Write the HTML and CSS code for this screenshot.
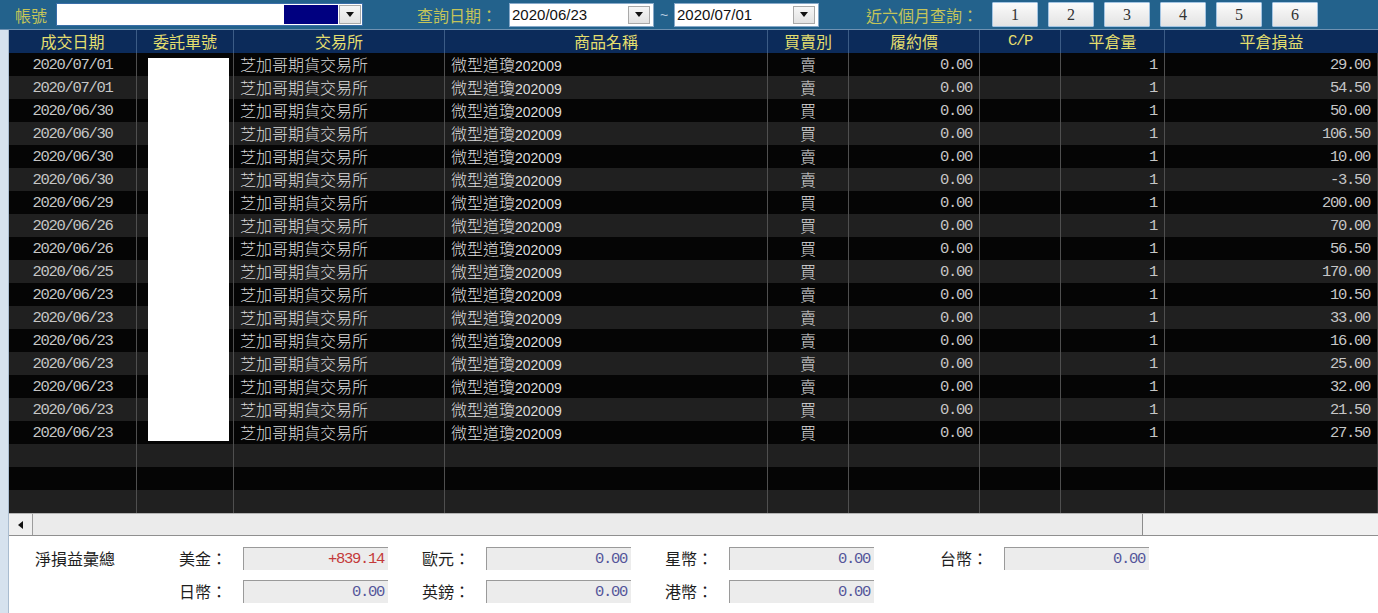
FILE: index.html
```html
<!DOCTYPE html>
<html lang="zh-Hant">
<head>
<meta charset="utf-8">
<title>平倉損益查詢</title>
<link rel="stylesheet" href="styles.css">
</head>
<body>
<div class="app">
  <div class="toolbar">
    <span class="tlabel acct-label">帳號</span>
    <div class="combo account">
      <div class="combo-text"></div>
      <div class="combo-sel"></div>
      <div class="drop-btn"><span class="tri"></span></div>
    </div>
    <span class="tlabel date-label">查詢日期：</span>
    <div class="combo date-combo">
      <span class="date-text">2020/06/23</span>
      <div class="drop-btn"><span class="tri"></span></div>
    </div>
    <span class="tilde">~</span>
    <div class="combo date-combo">
      <span class="date-text">2020/07/01</span>
      <div class="drop-btn"><span class="tri"></span></div>
    </div>
    <span class="tlabel recent-label">近六個月查詢：</span>
    <div class="month-btns">
      <button class="mbtn">1</button>
      <button class="mbtn">2</button>
      <button class="mbtn">3</button>
      <button class="mbtn">4</button>
      <button class="mbtn">5</button>
      <button class="mbtn">6</button>
    </div>
  </div>

  <div class="body">
    <div class="gutter"></div>
    <div class="content">
      <div class="row head">
        <div class="c">成交日期</div>
        <div class="c">委託單號</div>
        <div class="c">交易所</div>
        <div class="c">商品名稱</div>
        <div class="c">買賣別</div>
        <div class="c">履約價</div>
        <div class="c mono">C/P</div>
        <div class="c">平倉量</div>
        <div class="c">平倉損益</div>
      </div>

      <div class="rows">
        <div class="row"><div class="c date">2020/07/01</div><div class="c"></div><div class="c">芝加哥期貨交易所</div><div class="c">微型道瓊<span class="lat">202009</span></div><div class="c ctr">賣</div><div class="c num">0.00</div><div class="c"></div><div class="c num">1</div><div class="c num">29.00</div></div>
        <div class="row"><div class="c date">2020/07/01</div><div class="c"></div><div class="c">芝加哥期貨交易所</div><div class="c">微型道瓊<span class="lat">202009</span></div><div class="c ctr">賣</div><div class="c num">0.00</div><div class="c"></div><div class="c num">1</div><div class="c num">54.50</div></div>
        <div class="row"><div class="c date">2020/06/30</div><div class="c"></div><div class="c">芝加哥期貨交易所</div><div class="c">微型道瓊<span class="lat">202009</span></div><div class="c ctr">買</div><div class="c num">0.00</div><div class="c"></div><div class="c num">1</div><div class="c num">50.00</div></div>
        <div class="row"><div class="c date">2020/06/30</div><div class="c"></div><div class="c">芝加哥期貨交易所</div><div class="c">微型道瓊<span class="lat">202009</span></div><div class="c ctr">買</div><div class="c num">0.00</div><div class="c"></div><div class="c num">1</div><div class="c num">106.50</div></div>
        <div class="row"><div class="c date">2020/06/30</div><div class="c"></div><div class="c">芝加哥期貨交易所</div><div class="c">微型道瓊<span class="lat">202009</span></div><div class="c ctr">賣</div><div class="c num">0.00</div><div class="c"></div><div class="c num">1</div><div class="c num">10.00</div></div>
        <div class="row"><div class="c date">2020/06/30</div><div class="c"></div><div class="c">芝加哥期貨交易所</div><div class="c">微型道瓊<span class="lat">202009</span></div><div class="c ctr">賣</div><div class="c num">0.00</div><div class="c"></div><div class="c num">1</div><div class="c num">-3.50</div></div>
        <div class="row"><div class="c date">2020/06/29</div><div class="c"></div><div class="c">芝加哥期貨交易所</div><div class="c">微型道瓊<span class="lat">202009</span></div><div class="c ctr">買</div><div class="c num">0.00</div><div class="c"></div><div class="c num">1</div><div class="c num">200.00</div></div>
        <div class="row"><div class="c date">2020/06/26</div><div class="c"></div><div class="c">芝加哥期貨交易所</div><div class="c">微型道瓊<span class="lat">202009</span></div><div class="c ctr">買</div><div class="c num">0.00</div><div class="c"></div><div class="c num">1</div><div class="c num">70.00</div></div>
        <div class="row"><div class="c date">2020/06/26</div><div class="c"></div><div class="c">芝加哥期貨交易所</div><div class="c">微型道瓊<span class="lat">202009</span></div><div class="c ctr">買</div><div class="c num">0.00</div><div class="c"></div><div class="c num">1</div><div class="c num">56.50</div></div>
        <div class="row"><div class="c date">2020/06/25</div><div class="c"></div><div class="c">芝加哥期貨交易所</div><div class="c">微型道瓊<span class="lat">202009</span></div><div class="c ctr">買</div><div class="c num">0.00</div><div class="c"></div><div class="c num">1</div><div class="c num">170.00</div></div>
        <div class="row"><div class="c date">2020/06/23</div><div class="c"></div><div class="c">芝加哥期貨交易所</div><div class="c">微型道瓊<span class="lat">202009</span></div><div class="c ctr">賣</div><div class="c num">0.00</div><div class="c"></div><div class="c num">1</div><div class="c num">10.50</div></div>
        <div class="row"><div class="c date">2020/06/23</div><div class="c"></div><div class="c">芝加哥期貨交易所</div><div class="c">微型道瓊<span class="lat">202009</span></div><div class="c ctr">賣</div><div class="c num">0.00</div><div class="c"></div><div class="c num">1</div><div class="c num">33.00</div></div>
        <div class="row"><div class="c date">2020/06/23</div><div class="c"></div><div class="c">芝加哥期貨交易所</div><div class="c">微型道瓊<span class="lat">202009</span></div><div class="c ctr">賣</div><div class="c num">0.00</div><div class="c"></div><div class="c num">1</div><div class="c num">16.00</div></div>
        <div class="row"><div class="c date">2020/06/23</div><div class="c"></div><div class="c">芝加哥期貨交易所</div><div class="c">微型道瓊<span class="lat">202009</span></div><div class="c ctr">賣</div><div class="c num">0.00</div><div class="c"></div><div class="c num">1</div><div class="c num">25.00</div></div>
        <div class="row"><div class="c date">2020/06/23</div><div class="c"></div><div class="c">芝加哥期貨交易所</div><div class="c">微型道瓊<span class="lat">202009</span></div><div class="c ctr">賣</div><div class="c num">0.00</div><div class="c"></div><div class="c num">1</div><div class="c num">32.00</div></div>
        <div class="row"><div class="c date">2020/06/23</div><div class="c"></div><div class="c">芝加哥期貨交易所</div><div class="c">微型道瓊<span class="lat">202009</span></div><div class="c ctr">買</div><div class="c num">0.00</div><div class="c"></div><div class="c num">1</div><div class="c num">21.50</div></div>
        <div class="row"><div class="c date">2020/06/23</div><div class="c"></div><div class="c">芝加哥期貨交易所</div><div class="c">微型道瓊<span class="lat">202009</span></div><div class="c ctr">買</div><div class="c num">0.00</div><div class="c"></div><div class="c num">1</div><div class="c num">27.50</div></div>
        <div class="row"><div class="c"></div><div class="c"></div><div class="c"></div><div class="c"></div><div class="c"></div><div class="c"></div><div class="c"></div><div class="c"></div><div class="c"></div></div>
        <div class="row"><div class="c"></div><div class="c"></div><div class="c"></div><div class="c"></div><div class="c"></div><div class="c"></div><div class="c"></div><div class="c"></div><div class="c"></div></div>
        <div class="row"><div class="c"></div><div class="c"></div><div class="c"></div><div class="c"></div><div class="c"></div><div class="c"></div><div class="c"></div><div class="c"></div><div class="c"></div></div>
        <div class="order-mask"></div>
      </div>

      <div class="hscroll">
        <div class="sb-btn"><span class="tri-left"></span></div>
        <div class="sb-thumb"></div>
        <div class="sb-track"></div>
      </div>

      <div class="summary">
        <div class="sum-title">淨損益彙總</div>
        <div class="slabel">美金：</div>
        <div class="sbox neg-pos">+839.14</div>
        <div class="slabel">歐元：</div>
        <div class="sbox">0.00</div>
        <div class="slabel">星幣：</div>
        <div class="sbox">0.00</div>
        <div class="slabel">台幣：</div>
        <div class="sbox">0.00</div>

        <div></div>
        <div class="slabel">日幣：</div>
        <div class="sbox">0.00</div>
        <div class="slabel">英鎊：</div>
        <div class="sbox">0.00</div>
        <div class="slabel">港幣：</div>
        <div class="sbox">0.00</div>
      </div>
    </div>
  </div>
</div>
</body>
</html>
```

FILE: styles.css
```css
* { box-sizing: border-box; }

html, body {
  margin: 0;
  padding: 0;
  height: 100%;
}

body {
  background: #ffffff;
  font-family: "Noto Sans CJK TC", "Liberation Sans", sans-serif;
  font-size: 16px;
  overflow: hidden;
}

.app {
  width: 1378px;
  height: 613px;
  display: flex;
  flex-direction: column;
}

/* ---------- query toolbar ---------- */
.toolbar {
  flex: none;
  height: 30px;
  background: #23628c;
  border-bottom: 1px solid #6f92b2;
  display: flex;
  align-items: center;
  padding-left: 15px;
}

.tlabel {
  color: #c3c45a;
  font-size: 16px;
  line-height: 1;
  white-space: nowrap;
}

.date-label { margin-left: 54px; }
.recent-label { margin-left: 47px; }

.combo {
  display: flex;
  align-items: center;
  background: #ffffff;
}

.combo.account {
  width: 307px;
  height: 23px;
  margin-left: 9px;
  border: 1px solid #3a6ea8;
  padding: 1px 1px 1px 0;
}

.combo-text { flex: 1; height: 100%; }

.combo-sel {
  width: 54px;
  height: 100%;
  background: #000080;
}

.combo.account .drop-btn { margin-left: 1px; height: 100%; }

.date-combo {
  width: 145px;
  height: 24px;
  margin-left: 12px;
  border: 1px solid #87a9c9;
  padding: 2px 3px 2px 2px;
}

.date-text {
  flex: 1;
  font-family: "Liberation Sans", Arial, sans-serif;
  font-size: 15px;
  color: #111;
  line-height: 18px;
}

.drop-btn {
  width: 22px;
  height: 18px;
  background: linear-gradient(#f6f6f6, #e2e2e2);
  border: 1px solid #a9a9a9;
  display: flex;
  align-items: center;
  justify-content: center;
}

.tri {
  width: 0;
  height: 0;
  border-left: 4px solid transparent;
  border-right: 4px solid transparent;
  border-top: 5px solid #111;
}

.tilde {
  width: 20px;
  text-align: center;
  color: #b9cde0;
  font-family: "Liberation Sans", Arial, sans-serif;
  font-size: 14px;
}

.tilde + .date-combo { margin-left: 0; }

.month-btns {
  display: flex;
  gap: 10px;
  margin-left: 14px;
}

.mbtn {
  width: 46px;
  height: 25px;
  padding: 0;
  background: linear-gradient(#fbfbfb, #e3e3e3);
  border: 1px solid #a3c4e2;
  border-radius: 1px;
  color: #333;
  font-family: "Liberation Serif", serif;
  font-size: 16px;
}

/* ---------- grid area ---------- */
.body {
  flex: 1;
  display: flex;
  min-height: 0;
}

.gutter {
  flex: none;
  width: 9px;
  background: #d6e2ee;
  border-right: 1px solid #a9bccf;
}

.content {
  flex: 1;
  display: flex;
  flex-direction: column;
  min-width: 0;
}

.row {
  display: grid;
  grid-template-columns: 128px 97px 211px 323px 81px 131px 81px 104px 1fr;
  height: 23px;
}

.c {
  line-height: 23px;
  padding: 0 6px;
  white-space: nowrap;
  overflow: hidden;
}

.head { background: #0c2b5a; }

.head .c {
  color: #e4de6e;
  text-align: center;
  border-right: 1px solid #3c5c86;
}

.head .c:last-child { border-right: none; }

.rows {
  position: relative;
}

.rows .row:nth-child(odd) { background: #050505; }
.rows .row:nth-child(even) { background: #202020; }

.rows .c {
  color: #dcdcdc;
  font-weight: 300;
  border-right: 1px solid #4f4f4f;
}

.rows .c:last-child { border-right: 1px solid #3a3a3a; }

/* half-width digits: tall glyphs squeezed to an 8px advance */
.mono,
.date,
.num {
  font-family: "Liberation Mono", "DejaVu Sans Mono", monospace;
  font-size: 15.5px;
  letter-spacing: -1.3px;
}

.rows .date,
.rows .num {
  line-height: 25px;
  color: #c6c6c6;
}

.date { text-align: center; }
.num { text-align: right; padding-right: 7px; }
.ctr { text-align: center; }

.lat {
  font-family: "Liberation Sans", Arial, sans-serif;
  font-size: 14px;
}

/* blank sheet laid over the order-number column */
.order-mask {
  position: absolute;
  left: 139px;
  top: 5px;
  width: 81px;
  height: 383px;
  background: #ffffff;
}

/* ---------- horizontal scrollbar ---------- */
.hscroll {
  flex: none;
  height: 23px;
  display: flex;
  background: #efefef;
  border-top: 1px solid #b4b4b4;
  border-bottom: 1px solid #8f8f8f;
}

.sb-btn {
  width: 24px;
  border-right: 1px solid #9c9c9c;
  display: flex;
  align-items: center;
  justify-content: center;
}

.tri-left {
  width: 0;
  height: 0;
  border-top: 4px solid transparent;
  border-bottom: 4px solid transparent;
  border-right: 5px solid #111;
}

.sb-thumb {
  width: 1110px;
  background: #ebebeb;
  border-right: 1px solid #8c8c8c;
}

.sb-track {
  flex: 1;
  background: #f1f1f1;
}

/* ---------- totals ---------- */
.summary {
  flex: 1;
  display: grid;
  grid-template-columns: 143px 65px 145px 98px 145px 98px 145px 130px 145px;
  grid-auto-rows: 23px;
  row-gap: 10px;
  padding: 11px 0 0 26px;
  background: #ffffff;
  align-content: start;
}

.sum-title,
.slabel {
  color: #1e1e1e;
  font-size: 16px;
  line-height: 23px;
  white-space: nowrap;
}

.slabel {
  text-align: right;
  padding-right: 16px;
}

.sbox {
  background: #ececec;
  border-top: 1px solid #9a9a9a;
  border-left: 1px solid #9a9a9a;
  text-align: right;
  padding-right: 4px;
  font-family: "Liberation Mono", "DejaVu Sans Mono", monospace;
  font-size: 15.5px;
  letter-spacing: -1.3px;
  line-height: 22px;
  color: #55559a;
}

.sbox.neg-pos { color: #c43a3a; }
```
